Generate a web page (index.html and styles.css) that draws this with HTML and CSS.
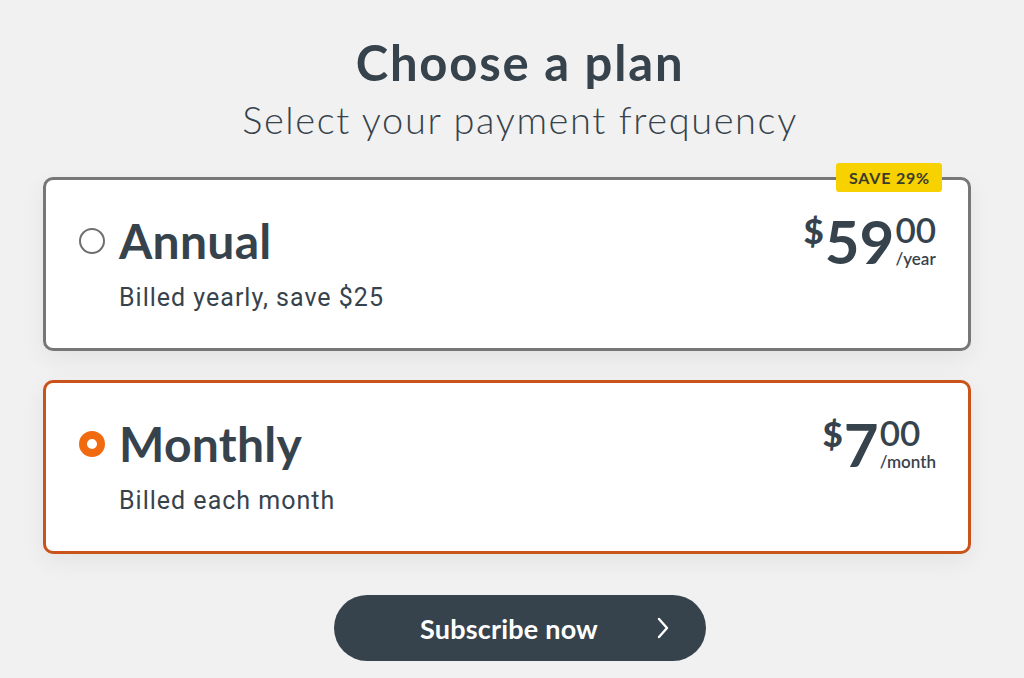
FILE: index.html
```html
<!DOCTYPE html>
<html lang="en">
<head>
<meta charset="utf-8">
<title>Choose a plan</title>
<link rel="stylesheet" href="styles.css">
</head>
<body>
<main class="page">
  <header class="head">
    <h1 class="title">Choose a plan</h1>
    <p class="subtitle">Select your payment frequency</p>
  </header>

  <div class="plans">
    <label class="plan plan-annual">
      <span class="badge">SAVE 29%</span>
      <div class="plan-main">
        <div class="plan-name-row">
          <span class="radio"></span>
          <span class="plan-name">Annual</span>
        </div>
        <div class="plan-desc">Billed yearly, save $25</div>
      </div>
      <div class="price">
        <span class="cur">$</span><span class="whole">59</span><span class="frac-col"><span class="cents">00</span><span class="per">/year</span></span>
      </div>
    </label>

    <label class="plan plan-monthly selected">
      <div class="plan-main">
        <div class="plan-name-row">
          <span class="radio radio-on"></span>
          <span class="plan-name">Monthly</span>
        </div>
        <div class="plan-desc">Billed each month</div>
      </div>
      <div class="price">
        <span class="cur">$</span><span class="whole">7</span><span class="frac-col"><span class="cents">00</span><span class="per">/month</span></span>
      </div>
    </label>
  </div>

  <div class="actions">
    <button class="subscribe" type="button">
      <span class="btn-text">Subscribe now</span>
      <svg class="chev" width="14" height="24" viewBox="0 0 14 24" aria-hidden="true"><path d="M3 3 L11 12 L3 21" fill="none" stroke="#ffffff" stroke-width="2.4" stroke-linecap="round" stroke-linejoin="round"/></svg>
    </button>
  </div>
</main>
</body>
</html>
```

FILE: styles.css
```css
* { box-sizing: border-box; }
html, body { margin: 0; padding: 0; }
body {
  background: #f1f1f1;
  color: #37434c;
  font-family: "Lato", "Inter", sans-serif;
  width: 1024px;
  height: 678px;
  overflow: hidden;
}
.page {
  width: 954px;
  margin-left: 43px;
  padding-top: 34px;
}
.head { text-align: center; }
.title {
  margin: 0;
  font-family: "Lato", sans-serif;
  font-weight: 700;
  font-size: 49px;
  line-height: 56px;
  letter-spacing: 1.8px;
  color: #37434c;
}
.subtitle {
  margin: 6px 0 0;
  font-family: "Lato", sans-serif;
  font-weight: 300;
  font-size: 38px;
  line-height: 46px;
  letter-spacing: 1.6px;
  color: #37434c;
}
.plans {
  width: 928px;
  margin-top: 35px;
  display: flex;
  flex-direction: column;
  gap: 29px;
}
.plan {
  position: relative;
  display: flex;
  justify-content: space-between;
  align-items: flex-start;
  background: #ffffff;
  border: 3px solid #777777;
  border-radius: 10px;
  height: 174px;
  padding: 31px 32px 0 33px;
  box-shadow: 0 8px 24px rgba(0,0,0,0.06);
}
.plan.selected { border-color: #c9531a; }
.badge {
  position: absolute;
  top: -17px;
  right: 26px;
  background: #f7d100;
  color: #3b3b2c;
  font-family: "Lato", sans-serif;
  font-weight: 700;
  font-size: 16px;
  letter-spacing: 0.8px;
  line-height: 29px;
  height: 29px;
  padding: 0 12px 0 13px;
  border-radius: 3px;
}
.plan-main { display: flex; flex-direction: column; }
.plan-name-row { display: flex; align-items: center; gap: 14px; }
.radio {
  width: 26px;
  height: 26px;
  border-radius: 50%;
  border: 2px solid #6f6f6f;
  background: #fff;
  flex: none;
}
.radio-on {
  border: 8px solid #f26a10;
  background: #fff;
}
.plan-name {
  font-family: "Lato", sans-serif;
  font-weight: 700;
  font-size: 48px;
  line-height: 60px;
  letter-spacing: 0.3px;
  color: #37434c;
}
.plan-desc {
  margin-top: 11px;
  margin-left: 40px;
  font-family: "Roboto", sans-serif;
  font-size: 25px;
  line-height: 32px;
  letter-spacing: 1px;
  color: #37434c;
}
.price {
  display: flex;
  align-items: flex-start;
  color: #37434c;
  font-family: "Lato", sans-serif;
  font-weight: 700;
  margin-top: 2px;
}
.cur { font-size: 35px; line-height: 34px; font-weight: 900; }
.whole { font-size: 60px; line-height: 56px; margin-left: 1px; margin-right: 1px; }
.frac-col { display: flex; flex-direction: column; align-items: flex-start; }
.cents { font-size: 35px; line-height: 32px; font-weight: 600; }
.per { font-size: 17px; line-height: 17px; font-weight: 600; margin-top: 5px; }
.actions { display: flex; justify-content: center; margin-top: 41px; }
.subscribe {
  width: 372px;
  height: 66px;
  border: none;
  border-radius: 33px;
  background: #37434c;
  color: #fff;
  display: flex;
  align-items: center;
  justify-content: flex-end;
  padding: 0 36px 0 0;
  cursor: pointer;
}
.btn-text {
  font-family: "Lato", sans-serif;
  font-weight: 700;
  font-size: 27px;
  letter-spacing: 0.2px;
  margin-right: 58px;
}
.chev { display: block; }
```
